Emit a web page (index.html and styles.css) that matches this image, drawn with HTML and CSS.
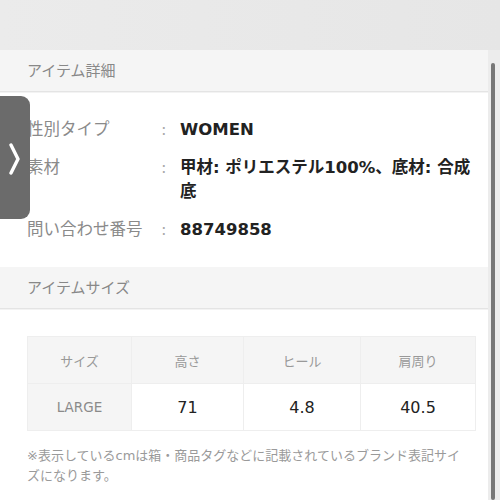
FILE: index.html
```html
<!DOCTYPE html>
<html lang="ja">
<head>
    <meta charset="UTF-8">
    <meta name="viewport" content="width=device-width, initial-scale=1.0">
    <title>アイテム詳細</title>
    <link rel="stylesheet" href="styles.css">
</head>
<body>
    <div class="top-band"></div>

    <div class="panel">
        <div class="section-head">アイテム詳細</div>
        <div class="details">
            <div class="row">
                <div class="label">性別タイプ</div>
                <div class="colon">:</div>
                <div class="value">WOMEN</div>
            </div>
            <div class="row">
                <div class="label">素材</div>
                <div class="colon">:</div>
                <div class="value">甲材: ポリエステル100%、底材: 合成底</div>
            </div>
            <div class="row">
                <div class="label">問い合わせ番号</div>
                <div class="colon">:</div>
                <div class="value">88749858</div>
            </div>
        </div>

        <div class="section-head">アイテムサイズ</div>
        <div class="sizes">
            <table class="size-table">
                <tr>
                    <th class="c1">サイズ</th>
                    <th class="c2">高さ</th>
                    <th class="c3">ヒール</th>
                    <th class="c4">肩周り</th>
                </tr>
                <tr>
                    <td class="size-name">LARGE</td>
                    <td>71</td>
                    <td>4.8</td>
                    <td>40.5</td>
                </tr>
            </table>
            <p class="note">※表示しているcmは箱・商品タグなどに記載されているブランド表記サイズになります。</p>
        </div>
    </div>

    <!-- overlays from the viewer -->
    <div class="side-tab">
        <svg width="12" height="32" viewBox="0 0 12 32">
            <path d="M2 2 L9 16 L2 30" fill="none" stroke="#fff" stroke-width="3.4" stroke-linecap="round" stroke-linejoin="round"/>
        </svg>
    </div>
    <div class="scrollbar"></div>
</body>
</html>
```

FILE: styles.css
```css
body {
    margin: 0;
    background: #ececec;
    font-family: "DejaVu Sans", "Noto Sans CJK JP", sans-serif;
    color: #222;
    overflow: hidden;
}
.top-band {
    height: 50px;
    background: linear-gradient(90deg, #ebebeb 0%, #e6e6e6 100%);
}
.panel {
    background: #fff;
    margin-right: 12px;
    min-height: 450px;
}
.section-head {
    background: #f5f5f5;
    color: #888;
    font-size: 15px;
    line-height: 20px;
    padding: 11px 27px 10px;
    border-bottom: 1px solid #e4e4e4;
    box-shadow: 0 1px 0 #f3f3f3;
}
.details {
    padding: 26px 0 25px 27px;
    display: flex;
    flex-direction: column;
    gap: 14px;
}
.row {
    display: flex;
    font-size: 16.5px;
    line-height: 24px;
}
.label {
    width: 134px;
    color: #8a8a8a;
}
.colon {
    width: 19px;
    color: #aaa;
}
.value {
    width: 296px;
    font-weight: bold;
    color: #222;
}
.sizes {
    padding: 27px 0 20px 27px;
}
.size-table {
    border-collapse: collapse;
    table-layout: fixed;
    width: 444px;
}
.size-table th,
.size-table td {
    border: 1px solid #eeeeee;
    text-align: center;
    padding: 0;
}
.size-table th {
    background: #f5f5f5;
    color: #999;
    font-size: 13px;
    font-weight: normal;
    height: 46px;
}
.size-table td {
    height: 46px;
    font-size: 16px;
    color: #222;
}
.size-table td.size-name {
    background: #f5f5f5;
    color: #8a8a8a;
    font-size: 13.5px;
}
.c1 { width: 103px; }
.c2 { width: 111px; }
.c3 { width: 116px; }
.c4 { width: 114px; }
.note {
    margin: 15px 0 0;
    width: 445px;
    color: #9a9a9a;
    font-size: 13px;
    line-height: 20px;
}
.side-tab {
    position: absolute;
    left: 0;
    top: 96px;
    width: 30px;
    height: 123px;
    background: #6b6b6b;
    border-radius: 0 9px 9px 0;
    display: flex;
    align-items: flex-start;
    justify-content: center;
    padding-top: 47px;
    box-sizing: border-box;
}
.scrollbar {
    position: absolute;
    left: 491px;
    top: 63px;
    width: 4px;
    height: 437px;
    background: #777;
    border-radius: 2px;
}
```
